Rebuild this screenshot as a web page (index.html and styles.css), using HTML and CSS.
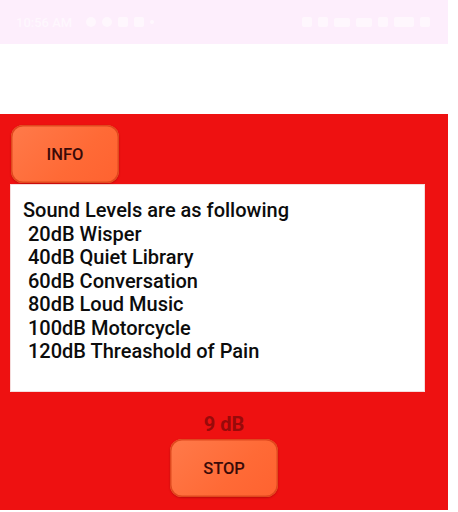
FILE: index.html
```html
<!DOCTYPE html>
<html>
<head>
<meta charset="utf-8">
<link rel="stylesheet" href="styles.css">
</head>
<body>
<div class="screen">
  <div class="status">
    <div class="status-left">
      <span class="time">10:56 AM</span>
      <span class="sicon round"></span>
      <span class="sicon round"></span>
      <span class="sicon sq"></span>
      <span class="sicon sq"></span>
      <span class="sdot"></span>
    </div>
    <div class="status-right">
      <span class="sicon sq"></span>
      <span class="sicon sq"></span>
      <span class="sicon wide"></span>
      <span class="sicon wide"></span>
      <span class="sicon sq"></span>
      <span class="sicon batt"></span>
      <span class="sicon sq"></span>
    </div>
  </div>
  <div class="blank"></div>
  <div class="panel">
    <div class="top-row">
      <button class="btn">INFO</button>
    </div>
    <div class="info-box">
      <div class="line">Sound Levels are as following</div>
      <div class="line">&nbsp;20dB Wisper</div>
      <div class="line">&nbsp;40dB Quiet Library</div>
      <div class="line">&nbsp;60dB Conversation</div>
      <div class="line">&nbsp;80dB Loud Music</div>
      <div class="line">&nbsp;100dB Motorcycle</div>
      <div class="line">&nbsp;120dB Threashold of Pain</div>
    </div>
    <div class="level">9 dB</div>
    <div class="bottom-row">
      <button class="btn">STOP</button>
    </div>
  </div>
</div>
</body>
</html>
```

FILE: styles.css
```css
html, body {
  margin: 0;
  padding: 0;
  background: #ffffff;
}
body {
  width: 458px;
  height: 512px;
  overflow: hidden;
  font-family: Roboto, "Liberation Sans", sans-serif;
}
.screen {
  width: 448px;
  display: flex;
  flex-direction: column;
}
.status {
  height: 44px;
  background: #fdeefc;
  display: flex;
  align-items: center;
  justify-content: space-between;
  padding: 0 18px 0 16px;
  box-sizing: border-box;
}
.status-left, .status-right {
  display: flex;
  align-items: center;
  gap: 6px;
  opacity: 0.55;
}
.time {
  color: #ffffff;
  font-size: 13px;
  font-weight: 500;
  margin-right: 8px;
}
.sicon {
  display: inline-block;
  background: #ffffff;
}
.sicon.round { width: 10px; height: 10px; border-radius: 50%; }
.sicon.sq { width: 10px; height: 10px; border-radius: 2px; }
.sicon.wide { width: 16px; height: 9px; border-radius: 2px; }
.sicon.batt { width: 20px; height: 10px; border-radius: 2px; }
.sdot { width: 4px; height: 4px; border-radius: 50%; background: #fff; display: inline-block; }
.blank {
  height: 70px;
}
.panel {
  background: #ee1111;
  height: 396px;
  display: flex;
  flex-direction: column;
  padding-top: 11px;
  box-sizing: border-box;
}
.top-row {
  padding-left: 11px;
  display: flex;
}
.btn {
  width: 108px;
  height: 58px;
  border: none;
  border-radius: 12px;
  background: linear-gradient(135deg, #ff7a4a 0%, #ff6a36 60%, #ff6230 100%);
  box-shadow: inset 0 0 0 1.5px #e0481e, 0 1px 2px rgba(120, 0, 0, 0.4);
  color: #3a0a08;
  font-family: Roboto, "Liberation Sans", sans-serif;
  font-size: 16.5px;
  font-weight: 500;
  padding: 0;
}
.info-box {
  margin: 1px 23px 0 10px;
  height: 208px;
  background: #ffffff;
  box-sizing: border-box;
  padding: 14px 0 0 12px;
  border: 1px solid #f4dcdc;
}
.line {
  color: #0c0c0c;
  font-size: 20px;
  font-weight: 500;
  line-height: 23.5px;
  white-space: pre;
}
.level {
  margin-top: 20px;
  text-align: center;
  color: #980a0a;
  font-size: 20px;
  font-weight: 700;
  line-height: 24px;
}
.bottom-row {
  margin-top: 3px;
  display: flex;
  justify-content: center;
}
```
